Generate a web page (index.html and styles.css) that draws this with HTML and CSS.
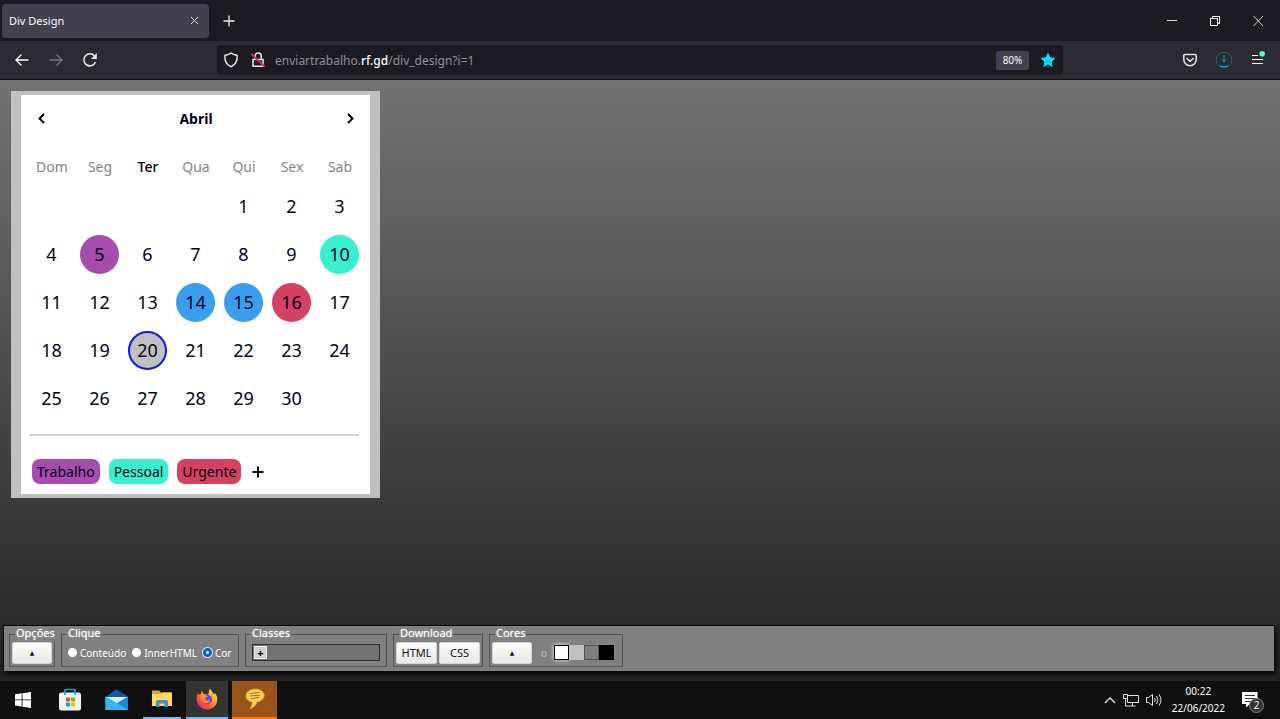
FILE: index.html
```html
<!DOCTYPE html>
<html lang="pt">
<head>
<meta charset="utf-8">
<title>Div Design</title>
<link rel="stylesheet" href="styles.css">
</head>
<body>
<header class="titlebar">
  <div class="tab"><span>Div Design</span>
    <button class="plain" aria-label="Fechar aba"><svg width="9" height="9" viewBox="0 0 9 9" stroke="#d5d4da"><path d="M1 1l7 7M8 1L1 8"/></svg></button>
  </div>
  <button class="plain newtab" aria-label="Nova aba"><svg width="12" height="12" viewBox="0 0 12 12" stroke="#eee" stroke-width="1.3"><path d="M6 .5v11M.5 6h11"/></svg></button>
  <div class="window-controls">
    <button class="plain" aria-label="Minimizar"><svg width="12" height="12" viewBox="0 0 12 12" stroke="#d8d8d8"><path d="M1 5.5h10"/></svg></button>
    <button class="plain" aria-label="Restaurar"><svg width="12" height="12" viewBox="0 0 12 12" fill="none" stroke="#fff"><path d="M1.500 3.500h7v7h-7zM3.500 3V1.500h7v7H9"/></svg></button>
    <button class="plain" aria-label="Fechar"><svg width="12" height="12" viewBox="0 0 12 12" stroke="#ccc"><path d="M1.500 1l9.500 10M11 1l-9.500 10"/></svg></button>
  </div>
</header>
<nav class="navbar">
  <div class="nav-buttons">
    <button class="plain" aria-label="Voltar"><svg width="16" height="16" viewBox="0 0 16 16" fill="none" stroke="#fbfbfe" stroke-width="1.400" stroke-linecap="round"><path d="M2 8h12M7 3L2 8l5 5"/></svg></button>
    <button class="plain" aria-label="Avançar"><svg width="16" height="16" viewBox="0 0 16 16" fill="none" stroke="#77767e" stroke-width="1.400" stroke-linecap="round"><path d="M2 8h12M9 3l5 5-5 5"/></svg></button>
    <button class="plain" aria-label="Recarregar"><svg width="16" height="16" viewBox="0 0 16 16" fill="none" stroke="#e8e8ed" stroke-width="1.500"><path d="M13.500 10A6 6 0 1 1 12.500 4"/><path d="M14.800 1v6H9z" fill="#e8e8ed" stroke="none"/></svg></button>
  </div>
  <div class="urlbar">
    <svg width="16" height="16" viewBox="0 0 16 16" fill="none" stroke="#e8e8ed" stroke-width="1.400" stroke-linejoin="round"><path d="M8 1C6 2.500 4 3 1.800 3.500c-.3 5 1.200 9 6.200 11.300 5-2.300 6.500-6.300 6.200-11.300C12 3 10 2.500 8 1z"/></svg>
    <svg class="lock" width="16" height="16" viewBox="0 0 16 16" fill="none" stroke="#e8e8ed" stroke-width="1.500"><path d="M3 7.500h10v6.700H3zM5.200 7V4a2.800 2.800 0 0 1 6 0v3"/><path d="M1.500 2L14.500 14.500" stroke="#e22850" stroke-width="1.800"/></svg>
    <div class="url">enviartrabalho.<b>rf.gd</b>/div_design?i=1</div>
    <button class="zoom">80%</button>
    <button class="plain" aria-label="Favorito"><svg width="16" height="16" viewBox="0 0 16 16" fill="#00ddff"><path d="M8 .5l2.200 4.700 5.300.7-3.800 3.800.9 5.500L8 12.600l-4.600 2.600.9-5.500L.5 5.900l5.300-.7z"/></svg></button>
  </div>
  <div class="nav-tools">
    <button class="plain" aria-label="Pocket"><svg width="16" height="16" viewBox="0 0 16 16" fill="none" stroke="#dedee3" stroke-width="1.600" stroke-linecap="round" stroke-linejoin="round"><path d="M3 2.500h10q1.200 0 1.200 1.200V7.500a6.200 6.200 0 0 1-12.400 0V3.700Q1.800 2.500 3 2.500zM5 6.500l3 3 3-3"/></svg></button>
    <button class="plain" aria-label="Downloads"><svg width="18" height="18" viewBox="0 0 18 18" fill="none" stroke="#00a8c8"><circle cx="9" cy="9" r="7.800" stroke="#136878"/><path d="M9 4.500v6.500M6.500 8.500L9 11l2.500-2.500"/><path d="M5.500 14v1.500h7V14"/></svg></button>
    <button class="plain" aria-label="Menu"><svg width="16" height="18" viewBox="0 0 16 18" fill="none" stroke="#fff" stroke-width="1.200"><path d="M2 4.500h6M2 8.500h11M2 12.500h11"/><circle cx="12.200" cy="2.800" r="2.800" fill="#54ffbd" stroke="none"/></svg></button>
  </div>
</nav>
<main class="page">
  <section class="calendar">
    <div class="month">
      <button class="plain" aria-label="Mês anterior"><svg width="10" height="12" viewBox="0 0 10 12" fill="none" stroke="#000014" stroke-width="2"><path d="M7 1L2.500 5.500 7 10"/></svg></button>
      <strong>Abril</strong>
      <button class="plain" aria-label="Próximo mês"><svg width="10" height="12" viewBox="0 0 10 12" fill="none" stroke="#000014" stroke-width="2"><path d="M3 1l4.500 4.500L3 10"/></svg></button>
    </div>
    <table class="days">
      <thead><tr><th>Dom</th><th>Seg</th><th class="current">Ter</th><th>Qua</th><th>Qui</th><th>Sex</th><th>Sab</th></tr></thead>
      <tbody>
        <tr><td></td><td></td><td></td><td></td><td><span>1</span></td><td><span>2</span></td><td><span>3</span></td></tr>
        <tr><td><span>4</span></td><td><span class="work">5</span></td><td><span>6</span></td><td><span>7</span></td><td><span>8</span></td><td><span>9</span></td><td><span class="personal">10</span></td></tr>
        <tr><td><span>11</span></td><td><span>12</span></td><td><span>13</span></td><td><span class="event">14</span></td><td><span class="event">15</span></td><td><span class="urgent">16</span></td><td><span>17</span></td></tr>
        <tr><td><span>18</span></td><td><span>19</span></td><td><span class="today">20</span></td><td><span>21</span></td><td><span>22</span></td><td><span>23</span></td><td><span>24</span></td></tr>
        <tr><td><span>25</span></td><td><span>26</span></td><td><span>27</span></td><td><span>28</span></td><td><span>29</span></td><td><span>30</span></td><td></td></tr>
      </tbody>
    </table>
    <hr class="rule">
    <div class="tags">
      <span class="tag work">Trabalho</span><span class="tag personal">Pessoal</span><span class="tag urgent">Urgente</span>
      <button class="plain" aria-label="Adicionar"><svg width="12" height="12" viewBox="0 0 12 12" stroke="#000014" stroke-width="2"><path d="M6 .5v11M.5 6h11"/></svg></button>
    </div>
  </section>
  <form class="toolbar">
    <fieldset class="options"><legend>Opções</legend><button type="button" class="btn arrow">▲</button></fieldset>
    <fieldset class="click"><legend>Clique</legend>
      <label><input type="radio" name="clique">Conteúdo</label>
      <label><input type="radio" name="clique">InnerHTML</label>
      <label><input type="radio" name="clique" checked>Cor</label>
    </fieldset>
    <fieldset class="classes"><legend>Classes</legend><div class="class-list"><button type="button" class="add">+</button></div></fieldset>
    <fieldset class="download"><legend>Download</legend><button type="button" class="btn">HTML</button><button type="button" class="btn">CSS</button></fieldset>
    <fieldset class="colors"><legend>Cores</legend><button type="button" class="btn arrow">▲</button><span class="dot">o</span>
      <div class="swatches"><button type="button" class="swatch white" aria-label="Branco"></button><button type="button" class="swatch silver" aria-label="Prata"></button><button type="button" class="swatch gray" aria-label="Cinza"></button><button type="button" class="swatch black" aria-label="Preto"></button></div>
    </fieldset>
  </form>
</main>
<footer class="taskbar">
  <button class="task" aria-label="Iniciar"><svg width="16" height="16" viewBox="0 0 16 16" fill="#fff"><path d="M0 2.300L6.700 1.300v6.200H0zM7.500 1.200L16 0v7.500H7.500zM0 8.300h6.700v6.200L0 13.600zM7.500 8.300H16V16l-8.500-1.300z"/></svg></button>
  <button class="task" aria-label="Loja"><svg width="22" height="24" viewBox="0 0 22 24"><rect y="4.500" width="22" height="18" rx="2.500" fill="#f3f3f5"/><path d="M5.800 7V2.800q0-1.300 1.300-1.300h7.800q1.300 0 1.300 1.300V7" fill="none" stroke="#1aa0dc" stroke-width="1.700"/><path d="M7 9.500h4v4H7z" fill="#f25022"/><path d="M12 9.500h4v4h-4z" fill="#7fba00"/><path d="M7 14.500h4v4H7z" fill="#00a4ef"/><path d="M12 14.500h4v4h-4z" fill="#ffb900"/></svg></button>
  <button class="task" aria-label="Correio"><svg width="24" height="24" viewBox="0 0 24 24"><path d="M.5 8.500L11.500 1.500l11.500 7v4H.5z" fill="#0c5ca8"/><path d="M1 9h22l-11 8z" fill="#e6f0fa"/><path d="M.5 8.500L23 22H.5z" fill="#2fb4ef"/><path d="M23 8.500V22H.5z" fill="#168bdc"/><path d="M.5 22V8.500L14 16.500 23 22z" fill="#31b8f2"/></svg></button>
  <button class="task open" aria-label="Explorador"><svg width="22" height="20" viewBox="0 0 22 20"><path d="M1 1.500h7l2 2h10V17H1z" fill="#e6a625"/><path d="M1 5h9l2-1.500h9V17H1z" fill="#ffd767"/><path d="M5 18v-5q0-2 2-2h8q2 0 2 2v5h-3.500v-3.500h-5V18z" fill="#3d91d1"/></svg></button>
  <button class="task open active" aria-label="Firefox"><svg width="24" height="24" viewBox="0 0 24 24"><defs><linearGradient id="fox" x1="1" y1="0" x2=".2" y2="1"><stop stop-color="#fff04a"/><stop offset=".4" stop-color="#ffae22"/><stop offset=".7" stop-color="#ff5a32"/><stop offset="1" stop-color="#ec207b"/></linearGradient></defs><path d="M2.800 6l1 2L6 6.800l.7-2.800 2 3 4.500.7L14 4l1-2.500 2 3 2.500 3 .5-1.500c3.500 4.500 3 10-.5 13.500-4 4-10.500 4-14.500 0-4-3.800-4-9-2.200-13.500z" fill="url(#fox)"/><circle cx="12.500" cy="12.500" r="4.600" fill="#6f3edb"/><path d="M5 9q3-2.500 5.500-1l2.500 1.500q-3 .8-3 2.800 2 2.500 5 .5 0 3-3.300 3.500Q6 16 5 9z" fill="#ff8b2c"/></svg></button>
  <button class="task chat" aria-label="Conversa"><svg width="22" height="24" viewBox="0 0 22 24"><path d="M11.500 2C5 2 1.500 5.500 2 10c.5 3 3.200 4.800 6.200 5-.2 2.500-1 4.500-2.200 7 4-1.700 6.500-4.200 7-7C22.500 13.500 23 2.500 11.500 2z" fill="#ffd45c" stroke="#d9951e"/><path d="M6.500 6.500l9-1M6 9l10-1M7 11.500l8-1" fill="none" stroke="#a96b13"/></svg></button>
  <div class="tray">
    <svg width="12" height="8" viewBox="0 0 12 8" fill="none" stroke="#e4e4e4" stroke-width="1.300"><path d="M1 7l5-5 5 5"/></svg>
    <svg width="16" height="14" viewBox="0 0 16 14" fill="none" stroke="#e4e4e4"><path d="M5 2.500h10.500v7H4.500V6M9.500 10v3M5.500 13h7M.5 1.500h4v4h-4zM2.500 5.500V13h3"/></svg>
    <svg width="16" height="14" viewBox="0 0 16 14" fill="none" stroke="#e4e4e4"><path d="M.5 4.500h2l4-3v11l-4-3h-2zM8.500 5q1.500 2 0 4M10.500 3q3 4 0 8M13 1.500q4 5.500 0 11"/></svg>
    <div class="clock"><time>00:22</time><time>22/06/2022</time></div>
    <div class="notice"><svg width="16" height="16" viewBox="0 0 16 16"><path d="M0 0h15.500v12H8l-4 3.500V12H0z" fill="#fff"/><path d="M3 3.500h10M3 6.500h10M3 9.500h7" stroke="#333"/></svg><span class="count">2</span></div>
  </div>
</footer>
</body>
</html>
```
FILE: styles.css
```css
* { box-sizing: border-box; }
body {
  margin: 0;
  min-height: 100vh;
  display: flex;
  flex-direction: column;
  font-family: "Noto Sans", "Open Sans", sans-serif;
  font-size: 11px;
}
button { font-family: inherit; padding: 0; }
svg { display: block; flex: none; }
.plain { border: 0; background: none; display: flex; }

.titlebar { height: 41px; background: #1c1b22; display: flex; align-items: center; padding-left: 2px; }
.tab {
  width: 207px;
  height: 34px;
  border-radius: 4px;
  background: #42414d;
  color: #fbfbfe;
  display: flex;
  align-items: center;
  justify-content: space-between;
  padding: 0 10px 0 7px;
}
.newtab { margin-left: 14px; }
.window-controls { margin-left: auto; display: flex; gap: 31px; padding-right: 16px; }

.navbar {
  height: 39px;
  background: #2b2a33;
  border-bottom: 1px solid #111116;
  display: flex;
  align-items: center;
}
.nav-buttons { display: flex; gap: 18px; width: 217px; padding-left: 14px; }
.urlbar {
  flex: 1;
  height: 30px;
  border-radius: 4px;
  background: #1c1b22;
  display: flex;
  align-items: center;
  padding: 0 7px 0 6px;
}
.lock { margin-left: 11px; }
.url { flex: 1; margin-left: 9px; font-size: 12px; color: #8f8e96; }
.url b { font-weight: 500; color: #fbfbfe; }
.zoom {
  width: 33px;
  height: 19px;
  margin-right: 11px;
  border: 0;
  border-radius: 2px;
  background: #42414d;
  color: #fbfbfe;
  font-size: 10px;
}
.nav-tools { width: 217px; display: flex; justify-content: flex-end; align-items: center; gap: 17px; padding-right: 14px; }

.page {
  flex: 1;
  display: flex;
  flex-direction: column;
  align-items: flex-start;
  justify-content: space-between;
  background: linear-gradient(#737373, #222222);
  padding: 11px 6px 10px 4px;
}
.calendar {
  margin-left: 7px;
  border: 4px solid #c0c0c0;
  border-width: 4px 10px;
  background: #fff;
  color: #000014;
  padding: 0 6px 10px 7px;
}
.month { height: 47px; display: flex; align-items: center; justify-content: space-between; padding: 0 9px; font-size: 14px; }
.days { margin-top: 8px; border-collapse: collapse; table-layout: fixed; width: 336px; text-align: center; }
.days th { height: 32px; padding: 0; font-size: 14px; font-weight: 400; color: #858585; }
.days .current { color: #000014; font-weight: 500; }
.days td { height: 48px; padding: 0; font-size: 18px; }
.days span { display: block; width: 39px; height: 39px; line-height: 38px; margin: 0 5px 0 4px; border-radius: 50%; }
.work { background: #a64cae; }
.personal { background: #37f0ce; }
.urgent { background: #d64062; }
.event { background: #399eed; }
.days .today { background: #c0c0c0; border: 2px solid #1414ee; line-height: 35px; }
.rule { border: 0; height: 2px; background: #d3d3d3; margin: 12px 5px 23px 1px; }
.tags { display: flex; align-items: center; gap: 9px; padding-left: 4px; font-size: 14px; }
.tag { height: 25px; line-height: 25px; padding: 0 5px; border-radius: 8px; }
.tags .plain { margin-left: 2px; }

.toolbar {
  width: 100%;
  height: 45px;
  padding: 1px 5px 4px;
  display: flex;
  gap: 6px;
  background: #808080;
  box-shadow: 0 0 0 1px #0c0c0c, 2px 3px 5px #000;
  color: #fff;
}
fieldset {
  margin: 0;
  min-width: 0;
  height: 40px;
  border: 1px solid #555;
  padding: 0 2px 2px;
  display: flex;
  align-items: center;
}
legend { height: 14px; line-height: 12px; margin-left: 3px; padding: 0 1px; text-shadow: 0 0 2px #ccc; }
.options { width: 46px; }
.click { width: 178px; gap: 6px; font-size: 10px; }
.click legend { font-size: 11px; }
.click label { display: flex; align-items: center; gap: 3px; }
.click label:first-of-type { margin-left: 4px; }
.click input { width: 9px; height: 9px; margin: 0; appearance: none; border-radius: 50%; background: #fff; }
.click input:checked { border: 3px solid #0060df; box-shadow: 0 0 0 1px #dce8fa; }
.classes { width: 142px; }
.class-list { width: 100%; margin: 0 4px; height: 17px; border: 1px solid #303030; background: #727272; padding: 1px; display: flex; }
.add { width: 13px; height: 13px; border: 1px solid #eee; background: #d0d0d0; font-size: 11px; font-weight: 700; line-height: 9px; }
.download { width: 90px; gap: 2px; }
.colors { width: 134px; }
.btn { width: 40px; height: 22px; border: 1px solid #d4d4d4; border-radius: 2px; background: linear-gradient(#fafafa, #e9e9e7); color: #111; font-size: 11px; }
.download .btn { flex: 1; }
.arrow { font-family: "DejaVu Sans", sans-serif; font-size: 6px; }
.dot { margin: 0 7px 0 9px; color: #bbb; font-size: 10px; }
.swatches { display: flex; }
.swatch { width: 15px; height: 15px; border: 1px solid #c0c0c0; }
.white { border-color: #000; background: #fff; box-shadow: 0 0 4px #fff; }
.silver { background: #c0c0c0; }
.gray { border-color: #555; background: #808080; }
.black { border-color: #000; background: #000; }

.taskbar { height: 38px; background: #101010; display: flex; }
.task { width: 47px; border: 0; background: none; display: flex; align-items: center; justify-content: center; }
.task:first-child { width: 46px; }
.open { width: 38px; margin: 0 5px 0 3px; border-bottom: 2px solid #76b9ed; }
.active { width: 42px; margin: 0 4px 0 0; background: #333; }
.chat { width: 45px; background: #99541a; border-bottom: 2px solid #f97a0a; }
.tray { margin-left: auto; display: flex; align-items: center; gap: 7px; padding-right: 22px; color: #fff; }
.clock { display: flex; flex-direction: column; align-items: center; margin: 0 10px 0 3px; font-size: 10px; line-height: 17px; }
.notice { position: relative; }
.count { position: absolute; left: 7px; top: 6px; width: 15px; height: 15px; border-radius: 50%; border: 1px solid #888; background: #333; font-size: 10px; line-height: 13px; text-align: center; }
```
